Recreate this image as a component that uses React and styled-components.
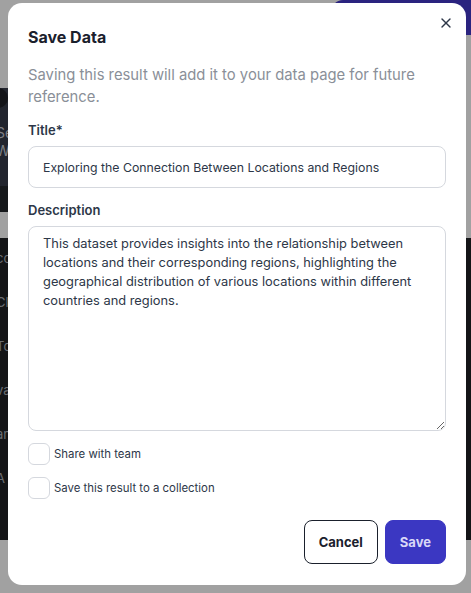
import React from "react";
import styled, { createGlobalStyle } from "styled-components";
import { X } from "lucide-react";

const GlobalStyle = createGlobalStyle`
  html, body {
    margin: 0;
    padding: 0;
    background: #ffffff;
    font-family: Inter, "Noto Sans", "Liberation Sans", sans-serif;
  }
  * { box-sizing: border-box; }
`;

export default function App() {
  return (
    <>
      <GlobalStyle />
      <Page>
        <TopBar>
          <TopButton>Upload</TopButton>
        </TopBar>
        <ChatCard>
          <Avatar />
          <ChatText>Search through<br />What is the match</ChatText>
        </ChatCard>
        <DarkTable>
          <TableLine>col_List</TableLine>
          <TableLine>Clear and</TableLine>
          <TableLine>Total</TableLine>
          <TableLine>value,</TableLine>
          <TableLine>and</TableLine>
          <TableLine>A</TableLine>
          <TableLine>l</TableLine>
        </DarkTable>
      </Page>

      <Overlay>
        <Modal role="dialog">
          <CloseButton aria-label="Close">
            <X size={16} strokeWidth={2} />
          </CloseButton>
          <Heading>Save Data</Heading>
          <Intro>
            Saving this result will add it to your data page for future
            reference.
          </Intro>

          <Label>Title*</Label>
          <TextInput
            defaultValue="Exploring the Connection Between Locations and Regions"
          />

          <Label>Description</Label>
          <TextArea
            defaultValue="This dataset provides insights into the relationship between locations and their corresponding regions, highlighting the geographical distribution of various locations within different countries and regions."
          />

          <CheckRow $top={12}>
            <CheckBox type="checkbox" />
            Share with team
          </CheckRow>
          <CheckRow $top={12}>
            <CheckBox type="checkbox" />
            Save this result to a collection
          </CheckRow>

          <Footer>
            <OutlineButton>Cancel</OutlineButton>
            <PrimaryButton>Save</PrimaryButton>
          </Footer>
        </Modal>
      </Overlay>
    </>
  );
}

/*--- BACKGROUND PAGE ---*/

const Page = styled.div`
  min-height: 100vh;
  display: flex;
  flex-direction: column;
  background: #ffffff;
`;

const TopBar = styled.div`
  height: 35px;
  display: flex;
  justify-content: flex-end;
`;

const TopButton = styled.div`
  width: 140px;
  background: #4338ca;
  color: #ffffff;
  border-radius: 12px 0 0 0;
  padding: 10px 14px;
  font-size: 14px;
`;

const ChatCard = styled.div`
  margin-top: 53px;
  width: 300px;
  height: 124px;
  background: #363b49;
  border-radius: 0 0 14px 0;
  display: flex;
  flex-direction: column;
`;

const Avatar = styled.div`
  width: 30px;
  height: 26px;
  margin-left: -22px;
  border-radius: 12px;
  background: #1f2126;
`;

const ChatText = styled.div`
  color: #c9ccd4;
  font-size: 14px;
  line-height: 18px;
  margin: 16px 0 0 -4px;
  padding-bottom: 26px;
  border-bottom: 26px solid #24272c;
`;

const DarkTable = styled.div`
  margin-top: 26px;
  height: 302px;
  background: #202225;
  padding: 12px 0 0 0;
  display: flex;
  flex-direction: column;
  gap: 28px;
`;

const TableLine = styled.div`
  color: #a9adb5;
  font-size: 13px;
  margin-left: -4px;
`;

/*--- MODAL ---*/

const Overlay = styled.div`
  position: fixed;
  inset: 0;
  background: rgba(0, 0, 0, 0.37);
  padding: 3px 5px 8px 8px;
  display: flex;
  align-items: flex-start;
`;

const Modal = styled.div`
  position: relative;
  flex: 1;
  background: #ffffff;
  border-radius: 14px;
  padding: 22px 20px 21px 20px;
  display: flex;
  flex-direction: column;
  color: #2d3748;
`;

const CloseButton = styled.button`
  position: absolute;
  top: 7px;
  right: 7px;
  width: 26px;
  height: 26px;
  border: none;
  background: transparent;
  color: #2d3748;
  padding: 0;
  display: flex;
  align-items: center;
  justify-content: center;
  cursor: pointer;
`;

const Heading = styled.h2`
  margin: 0;
  font-size: 16px;
  line-height: 24px;
  font-weight: 700;
  color: #1a202c;
`;

const Intro = styled.p`
  margin: 15px 0 0 0;
  font-size: 14.8px;
  line-height: 22px;
  color: #8a8f98;
`;

const Label = styled.label`
  margin-top: 12px;
  font-size: 13px;
  line-height: 20px;
  font-weight: 600;
  color: #2d3748;
`;

const TextInput = styled.input`
  margin-top: 6px;
  height: 42px;
  flex-shrink: 0;
  width: 100%;
  border: 1px solid #d5d8de;
  border-radius: 8px;
  padding: 0 14px;
  font-family: inherit;
  font-size: 12.3px;
  color: #2d3748;
  outline: none;
`;

const TextArea = styled.textarea`
  margin-top: 6px;
  height: 205px;
  flex-shrink: 0;
  width: 100%;
  border: 1px solid #d5d8de;
  border-radius: 8px;
  padding: 7px 14px;
  font-family: inherit;
  font-size: 12.85px;
  line-height: 19px;
  color: #2d3748;
  resize: vertical;
  outline: none;
`;

const CheckRow = styled.label`
  margin-top: ${(p) => p.$top}px;
  display: flex;
  align-items: center;
  gap: 4px;
  font-size: 11.4px;
  color: #2d3748;
`;

const CheckBox = styled.input`
  appearance: none;
  margin: 0;
  width: 22px;
  height: 22px;
  border: 1px solid #d5d8de;
  border-radius: 6px;
  background: #ffffff;
`;

const Footer = styled.div`
  margin-top: 21px;
  display: flex;
  justify-content: flex-end;
  gap: 7px;
`;

const BaseButton = styled.button`
  height: 44px;
  border-radius: 8px;
  font-family: inherit;
  font-size: 13px;
  font-weight: 700;
  padding: 0 14px;
  cursor: pointer;
`;

const OutlineButton = styled(BaseButton)`
  background: #ffffff;
  border: 1.5px solid #1a202c;
  color: #1a202c;
`;

const PrimaryButton = styled(BaseButton)`
  background: #3b37c2;
  border: 1.5px solid #3b37c2;
  color: #d9d8f7;
`;
